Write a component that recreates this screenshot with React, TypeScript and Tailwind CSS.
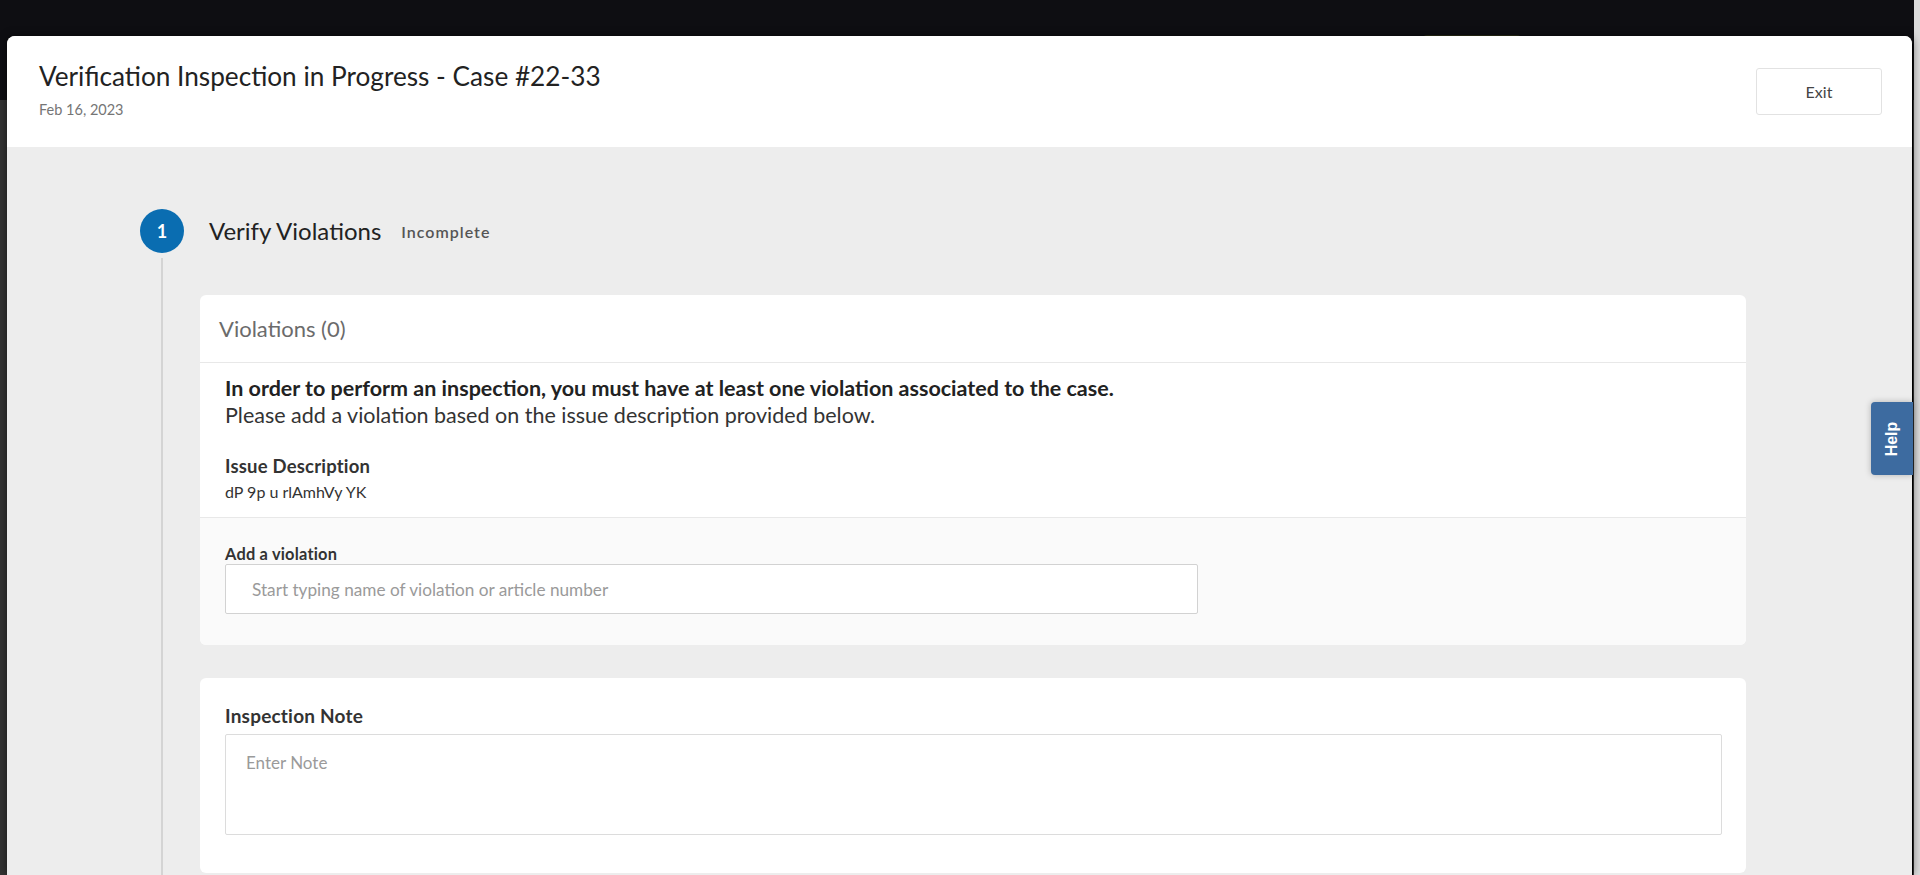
import React from 'react'

export default function App() {
  return (
    <div className="relative h-[875px] w-[1920px] overflow-hidden bg-[#333333]" style={{ fontFamily: 'Lato, "Open Sans", sans-serif' }}>
      {/* App header behind the overlay */}
      <div className="flex h-[100px] items-start bg-[#0e0e12]">
        <div className="ml-auto mt-[35px] flex items-center gap-8 pr-[250px]">
          <div className="h-8 w-[98px] rounded bg-[#2b2d17]" />
          <div className="h-7 w-7 rounded-full bg-[#0b3853]" />
          <div className="h-6 w-px bg-[#5a5a5a]" />
          <span className="text-sm text-[#888]">•••</span>
        </div>
      </div>

      {/* page scrollbar */}
      <div className="absolute right-0 top-0 h-full w-[6px] bg-[#dcdcdc]" />

      {/* Modal */}
      <div className="absolute left-[7px] top-[36px] bottom-0 flex w-[1906px] flex-col overflow-hidden rounded-t-lg border-r border-black bg-[#ededed] shadow-[0_0_8px_rgba(0,0,0,0.5)]">
        {/* Header */}
        <div className="flex h-[111px] shrink-0 items-start justify-between bg-white pl-[32px] pr-[30px] pt-[24px]">
          <div>
            <h1 className="text-[26.2px] leading-[33px] text-[#222]">Verification Inspection in Progress - Case #22-33</h1>
            <p className="mt-[8px] text-[14.5px] leading-[18px] text-[#757575]">Feb 16, 2023</p>
          </div>
          <button className="mt-[8px] h-[47px] w-[126px] rounded-[3px] border border-[#e2e2e2] bg-white text-[16px] text-[#444]">
            Exit
          </button>
        </div>

        {/* Body */}
        <div className="flex-1 pl-[133px] pr-[166px] pt-[62px]">
          {/* Step header */}
          <div className="flex items-center">
            <div className="flex h-[44px] w-[44px] items-center justify-center rounded-full bg-[#0a6db1] text-[18px] font-bold text-white">
              1
            </div>
            <h2 className="ml-[25px] text-[24px] text-[#222]">Verify Violations</h2>
            <span className="ml-[20px] mt-[1px] text-[16px] font-semibold tracking-[1px] text-[#555]">Incomplete</span>
          </div>

          <div className="flex">
            {/* timeline line */}
            <div className="flex w-[44px] justify-center pt-[5px]">
              <div className="h-[700px] w-[2px] bg-[#d4d4d4]" />
            </div>

            <div className="ml-[17px] flex w-[1546px] flex-col gap-[33px] pt-[42px]">
              {/* Violations card */}
              <div className="overflow-hidden rounded-md bg-white">
                <div className="flex h-[68px] items-center border-b border-[#e8e8e8] px-[19px]">
                  <h3 className="text-[22px] text-[#6b6b6b]">Violations (0)</h3>
                </div>
                <div className="px-[25px] pb-[15px] pt-[12px]">
                  <p className="text-[21.5px] font-bold leading-[27px] text-[#222]">
                    In order to perform an inspection, you must have at least one violation associated to the case.
                  </p>
                  <p className="text-[21.5px] leading-[27px] text-[#333]">
                    Please add a violation based on the issue description provided below.
                  </p>
                  <p className="mt-[26px] text-[18.5px] font-bold leading-[22px] tracking-[0.2px] text-[#333]">Issue Description</p>
                  <p className="mt-[5px] text-[16px] leading-[20px] text-[#333]">dP 9p u rlAmhVy YK</p>
                </div>
                <div className="border-t border-[#e8e8e8] bg-[#fafafa] px-[25px] pb-[31px] pt-[26px]">
                  <label className="block text-[16.4px] font-bold leading-[19px] tracking-[0.2px] text-[#333]">Add a violation</label>
                  <input
                    type="text"
                    placeholder="Start typing name of violation or article number"
                    className="mt-[1px] h-[50px] w-[973px] rounded-[2px] border border-[#d2d2d2] bg-white px-[26px] text-[17.2px] text-[#333] placeholder:text-[#9a9a9a] focus:outline-none"
                  />
                </div>
              </div>

              {/* Inspection note card */}
              <div className="rounded-md bg-white px-[25px] pb-[38px] pt-[27px]">
                <label className="block text-[19px] font-bold leading-[22px] tracking-[0.2px] text-[#333]">Inspection Note</label>
                <textarea
                  placeholder="Enter Note"
                  className="mt-[7px] block h-[101px] w-[1497px] resize-none rounded-[2px] border border-[#dcdcdc] bg-white px-[20px] pb-[19px] pt-[15px] text-[17px] text-[#333] placeholder:text-[#9a9a9a] focus:outline-none"
                />
              </div>
            </div>
          </div>
        </div>
      </div>

      {/* Help tab */}
      <button className="absolute right-[7px] top-[402px] flex h-[73px] w-[42px] items-center justify-center rounded-l-[4px] bg-[#3d6ba0] shadow-[0_0_6px_rgba(0,0,0,0.25)]">
        <span className="-rotate-90 text-[16px] font-bold text-white" style={{ fontFamily: '"Liberation Sans", Arial, sans-serif' }}>
          Help
        </span>
      </button>
    </div>
  )
}
